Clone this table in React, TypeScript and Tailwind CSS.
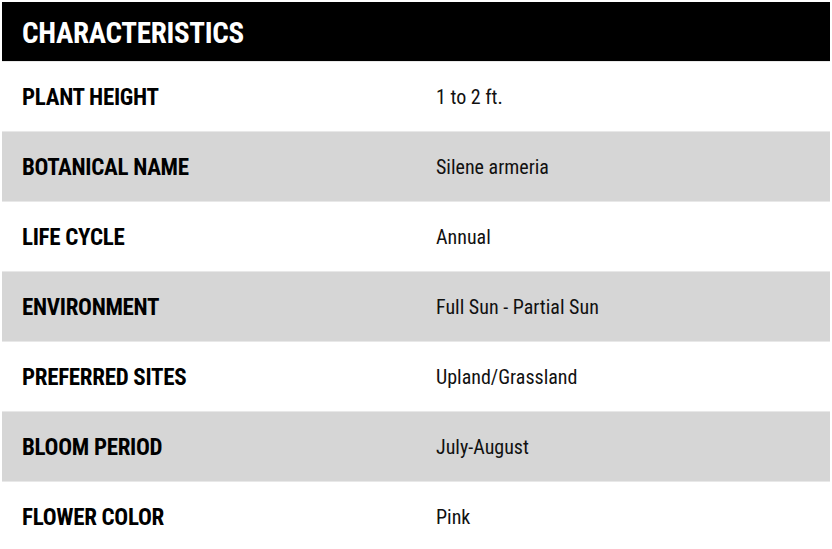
const rows = [
  { label: "PLANT HEIGHT", value: "1 to 2 ft." },
  { label: "BOTANICAL NAME", value: "Silene armeria" },
  { label: "LIFE CYCLE", value: "Annual" },
  { label: "ENVIRONMENT", value: "Full Sun - Partial Sun" },
  { label: "PREFERRED SITES", value: "Upland/Grassland" },
  { label: "BLOOM PERIOD", value: "July-August" },
  { label: "FLOWER COLOR", value: "Pink" },
];

export default function App() {
  return (
    <div className="w-[832px] h-[549px] overflow-hidden bg-white p-[2px] font-['Liberation_Sans_Narrow','Roboto_Condensed',sans-serif]">
      {/* Header */}
      <div className="h-[59px] bg-black flex items-center px-5 pt-[3px]">
        <h2 className="text-[29px] font-bold text-white tracking-[-0.3px] leading-none">
          CHARACTERISTICS
        </h2>
      </div>

      {/* Rows */}
      {rows.map((row, i) => (
        <div
          key={row.label}
          className={`flex h-[70px] border-t border-[#e8e8e8] ${i % 2 === 1 ? "bg-[#d6d6d6]" : "bg-white"}`}
        >
          <div className="w-1/2 flex items-center px-5 pt-1 text-[23px] font-bold text-black tracking-[-0.3px]">
            {row.label}
          </div>
          <div className="w-1/2 flex items-center px-5 text-[20px] text-[#111]">
            {row.value}
          </div>
        </div>
      ))}
    </div>
  );
}
